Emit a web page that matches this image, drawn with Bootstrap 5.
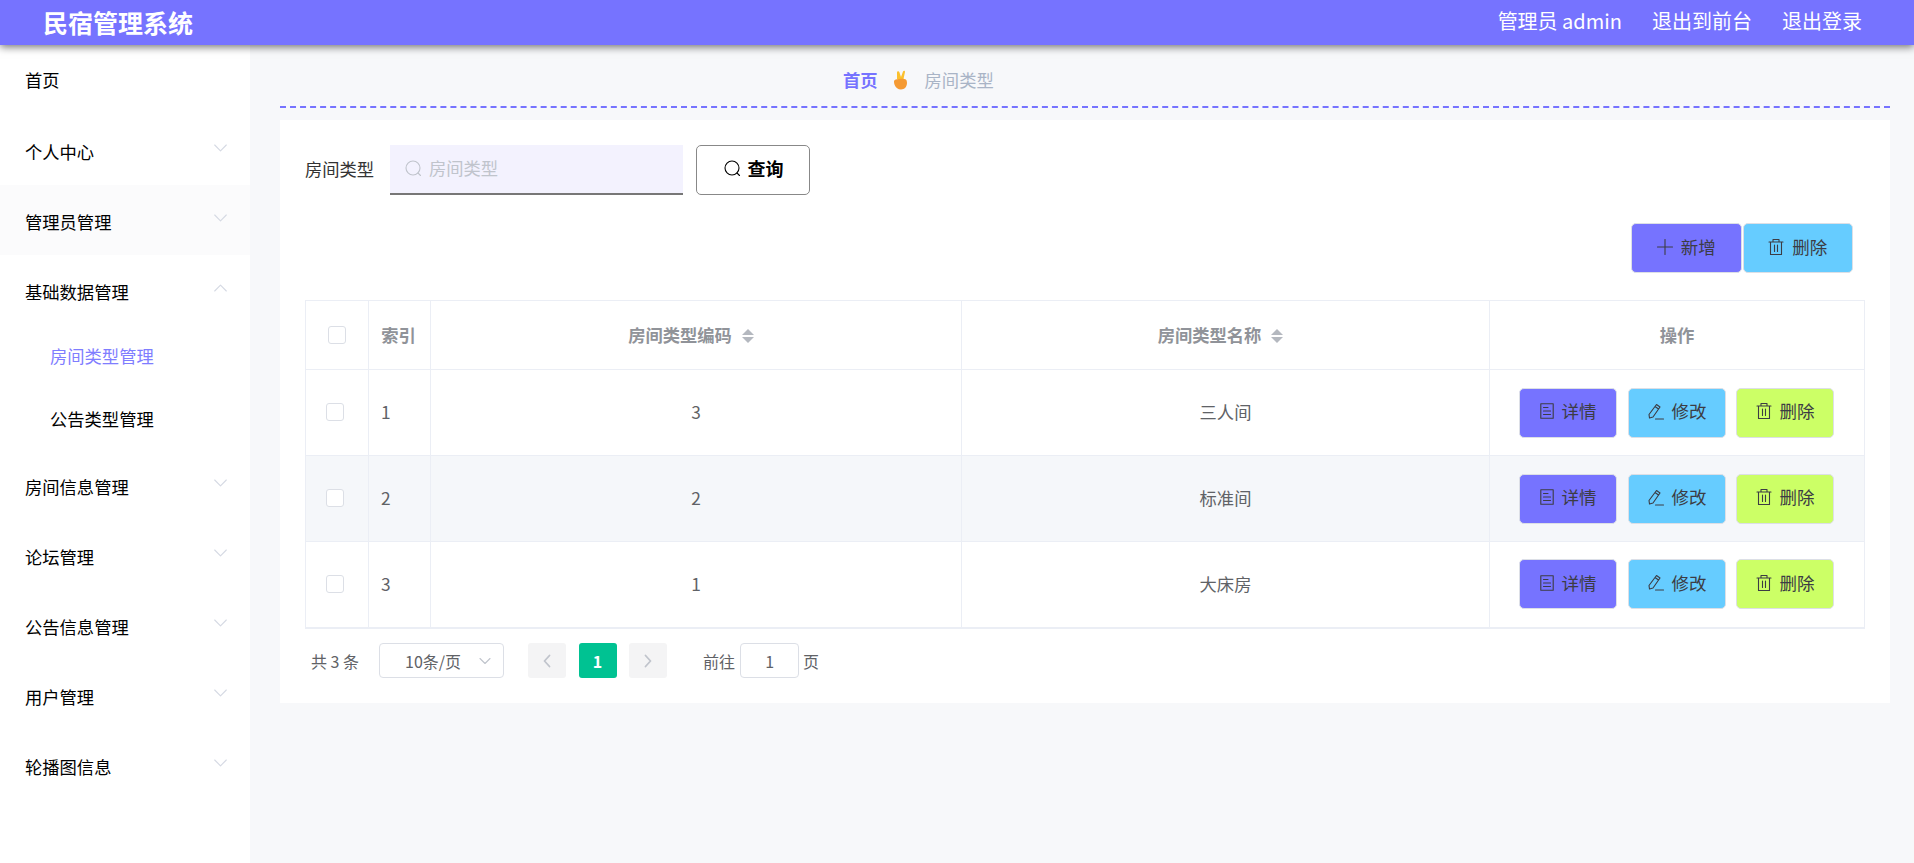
<!DOCTYPE html>
<html lang="zh-CN">
<head>
<meta charset="utf-8">
<title>民宿管理系统</title>
<link href="https://cdn.jsdelivr.net/npm/bootstrap@5.3.0/dist/css/bootstrap.min.css" rel="stylesheet">
<style>
html,body{height:100%;}
body{font-family:"Noto Sans CJK SC","Noto Sans",sans-serif;background:#f7f8fa;overflow:hidden;font-size:17px;color:#000;}
svg{flex:none;}
.ic{fill:none;stroke:currentColor;stroke-width:1.1;stroke-linecap:round;stroke-linejoin:round;}
.topbar{height:45px;background:#7673ff;box-shadow:0 2px 8px rgba(0,0,0,.55);position:relative;z-index:5;padding:0 52px 0 43px;}
.brand-t{font-size:25px;font-weight:700;color:#fff;line-height:45px;}
.top-link{font-size:20px;color:#fff;line-height:41px;height:45px;}
.top-links{gap:30px;}
.shell{height:818px;}
.side{width:250px;flex:none;background:#fff;}
.side-i{height:70px;padding:0 25px;font-size:17.3px;color:#000;line-height:1;padding-top:4px;}
.side-i.first{padding-top:0;}
.side-i.hov{background:#fbfbfc;}
.side-s{height:62.5px;padding-left:50px;font-size:17.3px;color:#000;}
.side-s.on{color:#7f7dff;}
.chev{color:#d5d9e3;margin-top:-8px;margin-right:-1.5px;}
.work{flex:1;padding:0 24px 0 30px;min-width:0;}
.crumb{height:63px;border-bottom:2px dashed #7673ff;padding-left:563px;padding-top:9px;font-size:17.3px;}
.crumb-a{color:#7673ff;font-weight:700;}
.crumb-b{color:#a9b4c6;margin-left:16px;}
.crumb-e{margin-left:15px;}
.panel{background:#fff;margin-top:12px;height:583px;padding:25px;}
.s-label{font-size:17.3px;color:#333;width:85px;padding-bottom:2px;}
.s-box{width:293px;height:50px;background:#f3f2fe;border-bottom:2px solid #777;padding-left:14px;color:#c0c4cc;font-size:17.3px;gap:6px;padding-bottom:2px;}
.btn.s-btn{width:114px;height:50px;margin-left:13px;border:1px solid #888;border-radius:5px;background:#fff;color:#000;font-weight:700;font-size:18px;padding:0 0 3px;gap:6px;}
.tools{margin-top:28px;margin-right:12px;gap:1px;}
.btn.act{height:50px;border:1px solid #dcdfe6;border-radius:5px;font-size:17.5px;color:#3c3c44;padding:0 0 3px;gap:8px;line-height:1;}
.tools .act{width:110.5px;}
.c-a{background:#7673ff;}
.c-b{background:#66ccff;}
.c-c{background:#ccff66;}
.btn.c-a:hover{background:#7673ff;}
.grid-t{table-layout:fixed;width:1560px;margin:27px 0 0 0;border-color:#ebeef5;border-bottom:2px solid #ebeef5;}
.grid-t th,.grid-t td{padding:0;vertical-align:middle;text-align:center;font-size:17.3px;color:#606266;border-color:#ebeef5;background:transparent;box-shadow:none;}
.grid-t th{height:69px;color:#909399;font-weight:700;}
.grid-t td{height:86px;padding-bottom:1px;}
.grid-t td.btn-cell{padding-bottom:0;}
.grid-t tr.alt td{background:#f5f7fa;}
.th-idx{padding-right:2px !important;}
.tick.form-check-input{width:18px;height:18px;margin:0;border:1px solid #dcdfe6;border-radius:3px;float:none;display:block;}
.tick-h{margin:0 0 0 22px !important;}
.tick-b{margin:0 0 0 20px !important;}
.idx{text-align:left !important;padding-left:12px !important;}
.sort{display:inline-block;margin:0 10px 0 10px;vertical-align:-1px;}
.row-btns{gap:10.5px;padding-left:29px;}
.row-btns .act{width:98px;}
.pager{margin-top:14px;padding-left:6px;font-size:16px;color:#606266;height:36px;}
.p-sel{width:125px;height:35px;border:1px solid #dcdfe6;border-radius:4px;margin-left:20px;padding:0 12px 0 25px;color:#606266;}
.p-btn{width:38px;height:35px;background:#f4f4f5;border-radius:3px;color:#c0c4cc;}
.p-btn.on{background:#00c292;color:#fff;font-weight:700;}
.p-gap{margin-left:12.5px;}
.p-go{margin-left:36px;}
.p-in{width:59px;height:35px;border:1px solid #dcdfe6;border-radius:4px;margin:0 4px 0 5px;color:#606266;}
.arrow{width:0;height:0;border-left:6px solid transparent;border-right:6px solid transparent;display:block;}
.arrow.up{border-bottom:6px solid #b4b8bf;margin-bottom:2px;}
.arrow.down{border-top:6px solid #b4b8bf;}
</style>
</head>
<body>
<nav class="topbar d-flex justify-content-between align-items-start">
  <div class="brand-t">民宿管理系统</div>
  <div class="d-flex top-links">
    <span class="top-link">管理员 admin</span>
    <span class="top-link">退出到前台</span>
    <span class="top-link">退出登录</span>
  </div>
</nav>
<div class="shell d-flex">
  <aside class="side d-flex flex-column">
    <div class="side-i first d-flex align-items-center">首页</div>
    <div class="side-i d-flex align-items-center justify-content-between">个人中心<svg class="chev ic" width="13" height="14" viewBox="0 0 13 14"><path d="M.7 4l5.800 5.800L12.300 4"/></svg></div>
    <div class="side-i hov d-flex align-items-center justify-content-between">管理员管理<svg class="chev ic" width="13" height="14" viewBox="0 0 13 14"><path d="M.7 4l5.800 5.800L12.300 4"/></svg></div>
    <div class="side-i d-flex align-items-center justify-content-between">基础数据管理<svg class="chev ic" width="13" height="14" viewBox="0 0 13 14"><path d="M.7 10l5.800-5.800L12.300 10"/></svg></div>
    <div class="side-s on d-flex align-items-center">房间类型管理</div>
    <div class="side-s d-flex align-items-center">公告类型管理</div>
    <div class="side-i d-flex align-items-center justify-content-between">房间信息管理<svg class="chev ic" width="13" height="14" viewBox="0 0 13 14"><path d="M.7 4l5.800 5.800L12.300 4"/></svg></div>
    <div class="side-i d-flex align-items-center justify-content-between">论坛管理<svg class="chev ic" width="13" height="14" viewBox="0 0 13 14"><path d="M.7 4l5.800 5.800L12.300 4"/></svg></div>
    <div class="side-i d-flex align-items-center justify-content-between">公告信息管理<svg class="chev ic" width="13" height="14" viewBox="0 0 13 14"><path d="M.7 4l5.800 5.800L12.300 4"/></svg></div>
    <div class="side-i d-flex align-items-center justify-content-between">用户管理<svg class="chev ic" width="13" height="14" viewBox="0 0 13 14"><path d="M.7 4l5.800 5.800L12.300 4"/></svg></div>
    <div class="side-i d-flex align-items-center justify-content-between">轮播图信息<svg class="chev ic" width="13" height="14" viewBox="0 0 13 14"><path d="M.7 4l5.800 5.800L12.300 4"/></svg></div>
  </aside>
  <main class="work">
    <div class="crumb d-flex align-items-center">
      <span class="crumb-a">首页</span>
      <svg class="crumb-e" width="16" height="20" viewBox="0 0 16 20">
        <path d="M4 2.500C4 1.200 5.800.8 6.300 2L8 7 10 1.500C10.500.2 12.200.5 12 2l-1.500 7 3 1-2 2-6-2-1.500-1z" fill="#fbc02d"/>
        <path d="M2.300 10c-.8 0-1.300.6-1.300 1.500 0 1 .2 2.500.8 3.700C2.800 17.800 5 19.500 8 19.500c3.500 0 6-2.800 6-6.500 0-2-.5-3.500-2-3.800-2-.4-3.500-.5-5.500-.2-1.500.2-3 .2-4.200.5z" fill="#f59a33"/>
      </svg>
      <span class="crumb-b">房间类型</span>
    </div>
    <section class="panel">
      <div class="d-flex align-items-center">
        <span class="s-label">房间类型</span>
        <div class="s-box d-flex align-items-center">
          <svg class="ic" width="19" height="19" viewBox="0 0 19 19"><circle cx="9" cy="9" r="7"/><path d="M14 14l2.500 2.500"/></svg>房间类型
        </div>
        <button class="btn s-btn d-flex align-items-center justify-content-center" type="button">
          <svg class="ic" width="19" height="19" viewBox="0 0 19 19"><circle cx="9" cy="9" r="7"/><path d="M14 14l2.500 2.500"/></svg>查询
        </button>
      </div>
      <div class="tools d-flex justify-content-end">
        <button class="btn act c-a d-flex align-items-center justify-content-center" type="button">
          <svg class="ic" width="16" height="16" viewBox="0 0 16 16"><path d="M8 .5v15M.5 8h15"/></svg>新增
        </button>
        <button class="btn act c-b d-flex align-items-center justify-content-center" type="button">
          <svg class="ic" width="16" height="18" viewBox="0 0 16 18"><path d="M1 4h14M5 4V1.500h6V4M2.500 4v12.500h11V4M6.500 7v6.500M9.500 7v6.500"/></svg>删除
        </button>
      </div>
      <table class="table table-bordered grid-t">
        <colgroup><col style="width:63px"><col style="width:62px"><col style="width:531px"><col style="width:528px"><col></colgroup>
        <thead>
          <tr>
            <th><input class="form-check-input tick tick-h" type="checkbox" aria-label="全选"></th>
            <th class="th-idx">索引</th>
            <th>房间类型编码<span class="sort"><i class="arrow up"></i><i class="arrow down"></i></span></th>
            <th>房间类型名称<span class="sort"><i class="arrow up"></i><i class="arrow down"></i></span></th>
            <th>操作</th>
          </tr>
        </thead>
        <tbody>
          <tr>
            <td><input class="form-check-input tick tick-b" type="checkbox" aria-label="选择"></td>
            <td class="idx">1</td><td>3</td><td>三人间</td>
            <td class="btn-cell"><div class="row-btns d-flex">
              <button class="btn act c-a d-flex align-items-center justify-content-center" type="button"><svg class="ic" width="14" height="16" viewBox="0 0 14 16"><path d="M.8.8h12.400v14.400H.8zM3.500 4.500h4.500M3.500 8h7M3.500 11.500h7"/></svg>详情</button>
              <button class="btn act c-b d-flex align-items-center justify-content-center" type="button"><svg class="ic" width="17" height="17" viewBox="0 0 17 17"><path d="M2 11.500L9.500 1.500l3.500 2.500-7 10-3.500 1zM8.500 16h8M8 3.500l3.500 2.500"/></svg>修改</button>
              <button class="btn act c-c d-flex align-items-center justify-content-center" type="button"><svg class="ic" width="16" height="18" viewBox="0 0 16 18"><path d="M1 4h14M5 4V1.500h6V4M2.500 4v12.500h11V4M6.500 7v6.500M9.500 7v6.500"/></svg>删除</button>
            </div></td>
          </tr>
          <tr class="alt">
            <td><input class="form-check-input tick tick-b" type="checkbox" aria-label="选择"></td>
            <td class="idx">2</td><td>2</td><td>标准间</td>
            <td class="btn-cell"><div class="row-btns d-flex">
              <button class="btn act c-a d-flex align-items-center justify-content-center" type="button"><svg class="ic" width="14" height="16" viewBox="0 0 14 16"><path d="M.8.8h12.400v14.400H.8zM3.500 4.500h4.500M3.500 8h7M3.500 11.500h7"/></svg>详情</button>
              <button class="btn act c-b d-flex align-items-center justify-content-center" type="button"><svg class="ic" width="17" height="17" viewBox="0 0 17 17"><path d="M2 11.500L9.500 1.500l3.500 2.500-7 10-3.500 1zM8.500 16h8M8 3.500l3.500 2.500"/></svg>修改</button>
              <button class="btn act c-c d-flex align-items-center justify-content-center" type="button"><svg class="ic" width="16" height="18" viewBox="0 0 16 18"><path d="M1 4h14M5 4V1.500h6V4M2.500 4v12.500h11V4M6.500 7v6.500M9.500 7v6.500"/></svg>删除</button>
            </div></td>
          </tr>
          <tr>
            <td><input class="form-check-input tick tick-b" type="checkbox" aria-label="选择"></td>
            <td class="idx">3</td><td>1</td><td>大床房</td>
            <td class="btn-cell"><div class="row-btns d-flex">
              <button class="btn act c-a d-flex align-items-center justify-content-center" type="button"><svg class="ic" width="14" height="16" viewBox="0 0 14 16"><path d="M.8.8h12.400v14.400H.8zM3.500 4.500h4.500M3.500 8h7M3.500 11.500h7"/></svg>详情</button>
              <button class="btn act c-b d-flex align-items-center justify-content-center" type="button"><svg class="ic" width="17" height="17" viewBox="0 0 17 17"><path d="M2 11.500L9.500 1.500l3.500 2.500-7 10-3.500 1zM8.500 16h8M8 3.500l3.500 2.500"/></svg>修改</button>
              <button class="btn act c-c d-flex align-items-center justify-content-center" type="button"><svg class="ic" width="16" height="18" viewBox="0 0 16 18"><path d="M1 4h14M5 4V1.500h6V4M2.500 4v12.500h11V4M6.500 7v6.500M9.500 7v6.500"/></svg>删除</button>
            </div></td>
          </tr>
        </tbody>
      </table>
      <div class="pager d-flex align-items-center">
        <span>共 3 条</span>
        <div class="p-sel d-flex align-items-center justify-content-between">10条/页<svg class="ic" style="color:#c0c4cc" width="12" height="12" viewBox="0 0 12 12"><path d="M1 3.500l5 5 5-5"/></svg></div>
        <div class="p-btn d-flex align-items-center justify-content-center ms-4"><svg class="ic" width="10" height="14" viewBox="0 0 10 14"><path d="M7.500 1.500L2.500 7l5 5.500" stroke-width="1.800"/></svg></div>
        <div class="p-btn on p-gap d-flex align-items-center justify-content-center">1</div>
        <div class="p-btn p-gap d-flex align-items-center justify-content-center"><svg class="ic" width="10" height="14" viewBox="0 0 10 14"><path d="M2.500 1.500L7.500 7l-5 5.500" stroke-width="1.800"/></svg></div>
        <span class="p-go">前往</span>
        <div class="p-in d-flex align-items-center justify-content-center">1</div>
        <span>页</span>
      </div>
    </section>
  </main>
</div>
<script src="https://cdn.jsdelivr.net/npm/bootstrap@5.3.0/dist/js/bootstrap.bundle.min.js"></script>
</body>
</html>
